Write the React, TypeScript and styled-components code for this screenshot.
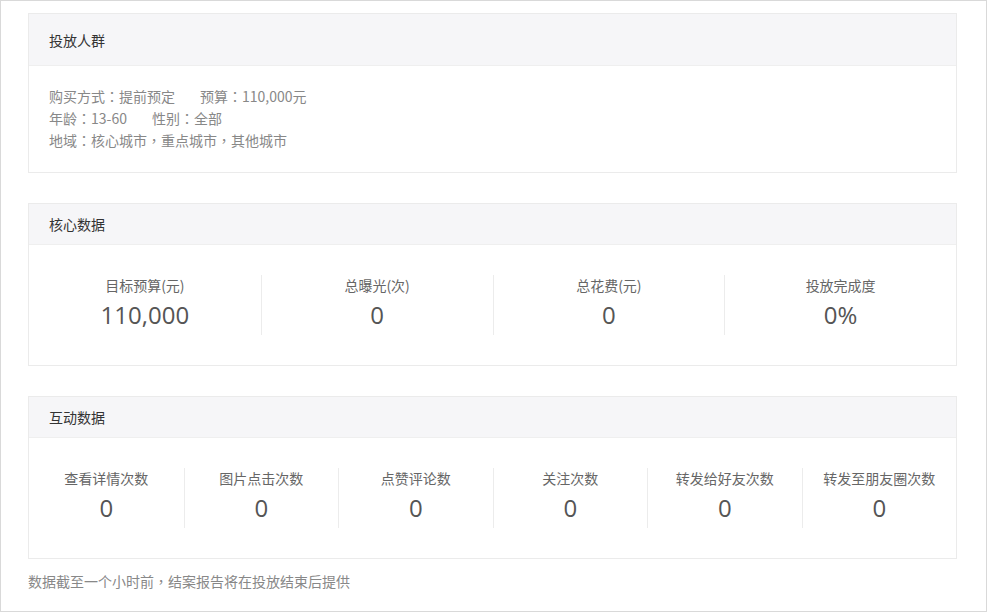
import React from "react";
import styled, { createGlobalStyle } from "styled-components";

const GlobalStyle = createGlobalStyle`
  html, body {
    margin: 0;
    padding: 0;
    background: #fff;
  }
  body {
    font-family: "Noto Sans CJK SC", "Microsoft YaHei", sans-serif;
    color: #333;
  }
  * {
    box-sizing: border-box;
  }
`;

const Frame = styled.div`
  width: 987px;
  height: 612px;
  border: 1px solid #d9d9d9;
  padding: 12px 29px 0 27px;
  display: flex;
  flex-direction: column;
  gap: 30px;
`;

const Card = styled.section`
  border: 1px solid #ebebeb;
  background: #fff;
`;

const CardHeader = styled.div<{ $tall?: boolean }>`
  height: ${(p) => (p.$tall ? 52 : 41)}px;
  display: flex;
  align-items: center;
  padding-left: 20px;
  background: #f6f6f8;
  border-bottom: 1px solid #efefef;
  font-size: 14px;
  color: #333;
`;

const InfoBody = styled.div`
  padding: 19px 20px 21px;
  font-size: 14px;
  line-height: 22px;
  color: #888;
`;

const InfoLine = styled.div`
  display: flex;
  gap: 25px;
`;

// centred full-width punctuation, as in the reference
const Punct = styled.span`
  font-family: "Noto Sans CJK TC", "Noto Sans CJK SC", sans-serif;
`;

const StatRow = styled.div`
  display: grid;
  grid-template-columns: repeat(${(p: { $cols: number }) => p.$cols}, 1fr);
  padding: 30px 0;
`;

const Stat = styled.div`
  display: flex;
  flex-direction: column;
  align-items: center;
  height: 60px;
  & + & {
    border-left: 1px solid #ececec;
  }
`;

const StatLabel = styled.div`
  font-size: 14px;
  line-height: 20px;
  color: #666;
`;

const StatValue = styled.div`
  font-family: "Open Sans", "Liberation Sans", sans-serif;
  font-size: 24px;
  line-height: 40px;
  color: #555;
`;

const Footnote = styled.div`
  margin-top: -18px;
  font-size: 14px;
  line-height: 20px;
  color: #888;
`;

const coreStats = [
  { label: "目标预算(元)", value: "110,000" },
  { label: "总曝光(次)", value: "0" },
  { label: "总花费(元)", value: "0" },
  { label: "投放完成度", value: "0%" },
];

const interactStats = [
  { label: "查看详情次数", value: "0" },
  { label: "图片点击次数", value: "0" },
  { label: "点赞评论数", value: "0" },
  { label: "关注次数", value: "0" },
  { label: "转发给好友次数", value: "0" },
  { label: "转发至朋友圈次数", value: "0" },
];

function StatGrid({ items }: { items: { label: string; value: string }[] }) {
  return (
    <StatRow $cols={items.length}>
      {items.map((s) => (
        <Stat key={s.label}>
          <StatLabel>{s.label}</StatLabel>
          <StatValue>{s.value}</StatValue>
        </Stat>
      ))}
    </StatRow>
  );
}

function Field({ name, value }: { name: string; value: string }) {
  return (
    <span>
      {name}
      <Punct>：</Punct>
      {value}
    </span>
  );
}

export default function App() {
  return (
    <>
      <GlobalStyle />
      <Frame>
        <Card>
          <CardHeader $tall>投放人群</CardHeader>
          <InfoBody>
            <InfoLine>
              <Field name="购买方式" value="提前预定" />
              <Field name="预算" value="110,000元" />
            </InfoLine>
            <InfoLine>
              <Field name="年龄" value="13-60" />
              <Field name="性别" value="全部" />
            </InfoLine>
            <InfoLine>
              <span>
                地域<Punct>：</Punct>核心城市<Punct>，</Punct>重点城市
                <Punct>，</Punct>其他城市
              </span>
            </InfoLine>
          </InfoBody>
        </Card>

        <Card>
          <CardHeader>核心数据</CardHeader>
          <StatGrid items={coreStats} />
        </Card>

        <Card>
          <CardHeader>互动数据</CardHeader>
          <StatGrid items={interactStats} />
        </Card>

        <Footnote>
          数据截至一个小时前<Punct>，</Punct>结案报告将在投放结束后提供
        </Footnote>
      </Frame>
    </>
  );
}
